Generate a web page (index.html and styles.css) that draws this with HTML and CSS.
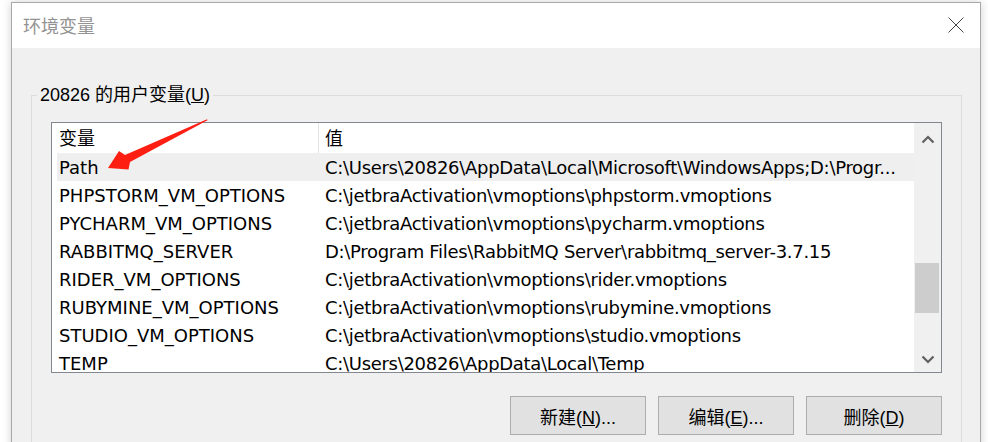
FILE: index.html
```html
<!DOCTYPE html>
<html lang="zh-CN">
<head>
    <meta charset="UTF-8">
    <meta name="viewport" content="width=device-width, initial-scale=1.0">
    <title>环境变量</title>
    <link rel="stylesheet" href="styles.css">
</head>
<body>
    <div class="dialog">
        <div class="titlebar">
            <span class="title">环境变量</span>
            <svg class="close" width="16" height="16" viewBox="0 0 16 16">
                <path d="M0.5 0.5 L15.5 15.5 M15.5 0.5 L0.5 15.5" stroke="#444" stroke-width="1" fill="none"/>
            </svg>
        </div>

        <div class="dialog-body">
            <fieldset class="group">
                <legend>20826 的用户变量(<u>U</u>)</legend>

                <div class="listview">
                    <div class="list-main">
                        <div class="list-header">
                            <div class="head-name">变量</div>
                            <div class="head-value">值</div>
                        </div>
                        <div class="list-rows">
                            <div class="row selected">
                                <div class="cell-name">Path</div>
                                <div class="cell-value">C:\Users\20826\AppData\Local\Microsoft\WindowsApps;D:\Progr...</div>
                            </div>
                            <div class="row">
                                <div class="cell-name">PHPSTORM_VM_OPTIONS</div>
                                <div class="cell-value">C:\jetbraActivation\vmoptions\phpstorm.vmoptions</div>
                            </div>
                            <div class="row">
                                <div class="cell-name">PYCHARM_VM_OPTIONS</div>
                                <div class="cell-value">C:\jetbraActivation\vmoptions\pycharm.vmoptions</div>
                            </div>
                            <div class="row">
                                <div class="cell-name">RABBITMQ_SERVER</div>
                                <div class="cell-value">D:\Program Files\RabbitMQ Server\rabbitmq_server-3.7.15</div>
                            </div>
                            <div class="row">
                                <div class="cell-name">RIDER_VM_OPTIONS</div>
                                <div class="cell-value">C:\jetbraActivation\vmoptions\rider.vmoptions</div>
                            </div>
                            <div class="row">
                                <div class="cell-name">RUBYMINE_VM_OPTIONS</div>
                                <div class="cell-value">C:\jetbraActivation\vmoptions\rubymine.vmoptions</div>
                            </div>
                            <div class="row">
                                <div class="cell-name">STUDIO_VM_OPTIONS</div>
                                <div class="cell-value">C:\jetbraActivation\vmoptions\studio.vmoptions</div>
                            </div>
                            <div class="row">
                                <div class="cell-name">TEMP</div>
                                <div class="cell-value">C:\Users\20826\AppData\Local\Temp</div>
                            </div>
                        </div>
                    </div>

                    <div class="scrollbar">
                        <div class="scroll-btn up">
                            <svg width="14" height="9" viewBox="0 0 14 9">
                                <path d="M1.5 7.5 L7 2 L12.5 7.5" stroke="#606060" stroke-width="2.2" fill="none"/>
                            </svg>
                        </div>
                        <div class="scroll-track">
                            <div class="scroll-thumb"></div>
                        </div>
                        <div class="scroll-btn down">
                            <svg width="14" height="9" viewBox="0 0 14 9">
                                <path d="M1.5 1.5 L7 7 L12.5 1.5" stroke="#606060" stroke-width="2.2" fill="none"/>
                            </svg>
                        </div>
                    </div>
                </div>

                <div class="actions">
                    <button>新建(<u>N</u>)...</button>
                    <button>编辑(<u>E</u>)...</button>
                    <button>删除(<u>D</u>)</button>
                </div>
            </fieldset>
        </div>
    </div>

    <!-- red pointer drawn over the list -->
    <svg class="pointer-arrow" width="988" height="442" viewBox="0 0 988 442">
        <polygon points="207,119.3 125,155 119,151 108,168 128.5,169.5 130,162 207.5,120.3" fill="#ff1e12"/>
    </svg>
</body>
</html>
```

FILE: styles.css
```css
html, body {
    height: 442px;
    overflow: hidden;
}
body {
    margin: 0;
    position: relative;
    background-color: #ffffff;
    font-family: "DejaVu Sans", "Noto Sans CJK SC", sans-serif;
    font-size: 18px;
    color: #000;
}
.dialog {
    margin: 2px 0 0 11px;
    width: 970px;
    height: 560px;
    box-sizing: border-box;
    border: 1px solid #a8a8a8;
    background: #f0f0f0;
    box-shadow: 0 0 9px rgba(0,0,0,0.18);
}
.titlebar {
    height: 45px;
    background: #fff;
    display: flex;
    align-items: center;
    justify-content: space-between;
    padding: 0 16px 0 11px;
}
.title {
    color: #939393;
    font-size: 18px;
    margin-top: -2px;
}
.close {
    display: block;
    margin-top: -1px;
}
.dialog-body {
    padding: 35px 18px 0 19px;
}
.group {
    margin: 0;
    min-width: 0;
    border: 1px solid #dcdcdc;
    padding: 15px 19px 40px 19px;
}
.group legend {
    margin-left: -14px;
    padding: 0 3px;
    line-height: 24px;
    font-family: "Liberation Sans", "Noto Sans CJK SC", sans-serif;
}
.listview {
    display: flex;
    height: 249px;
    border: 1px solid #828790;
    background: #fff;
}
.list-main {
    flex: 1;
    min-width: 0;
    overflow: hidden;
}
.list-header {
    display: flex;
    height: 30px;
    line-height: 32px;
}
.head-name {
    width: 259px;
    padding-left: 7px;
    border-right: 1px solid #e5e5e5;
}
.head-value {
    padding-left: 6px;
}
.row {
    display: flex;
    height: 28px;
    line-height: 30px;
    margin-left: 5px;
    white-space: nowrap;
}
.row.selected {
    background: #efefef;
}
.cell-name {
    width: 259px;
    flex: none;
    padding-left: 2px;
}
.cell-value {
    padding-left: 7px;
    letter-spacing: -0.3px;
    overflow: hidden;
}
.scrollbar {
    width: 27px;
    flex: none;
    display: flex;
    flex-direction: column;
    background: #f0f0f0;
}
.scroll-btn {
    display: flex;
    align-items: center;
    justify-content: center;
}
.scroll-btn.up {
    height: 32px;
}
.scroll-btn.down {
    height: 26px;
}
.scroll-track {
    flex: 1;
}
.scroll-thumb {
    margin: 108px 2px 0 1px;
    height: 50px;
    background: #cdcdcd;
}
.actions {
    display: flex;
    justify-content: flex-end;
    gap: 12px;
    margin-top: 23px;
}
.actions button {
    width: 136px;
    height: 39px;
    border: 1px solid #adadad;
    background: #e1e1e1;
    font-family: "Liberation Sans", "Noto Sans CJK SC", sans-serif;
    font-size: 18px;
    color: #000;
    padding: 0;
}
.pointer-arrow {
    position: absolute;
    left: 0;
    top: 0;
    pointer-events: none;
}
```
